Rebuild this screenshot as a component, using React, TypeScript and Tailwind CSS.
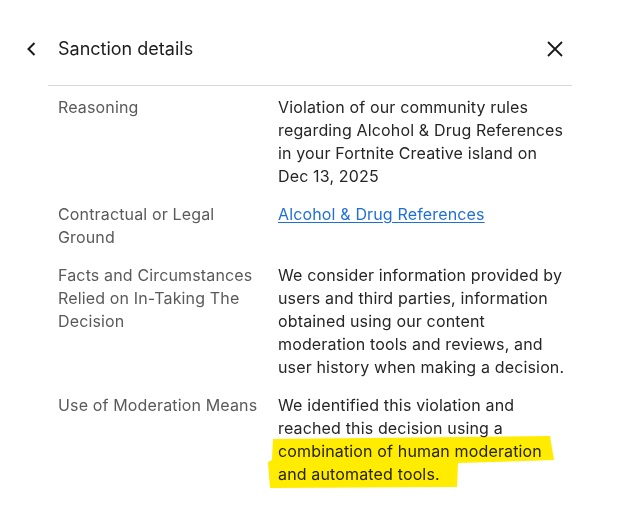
import React from "react";

const rows: { label: string; value: React.ReactNode }[] = [
  {
    label: "Reasoning",
    value:
      "Violation of our community rules regarding Alcohol & Drug References in your Fortnite Creative island on Dec 13, 2025",
  },
  {
    label: "Contractual or Legal Ground",
    value: (
      <a href="#" className="text-[#1f6fd8] underline underline-offset-2">
        Alcohol &amp; Drug References
      </a>
    ),
  },
  {
    label: "Facts and Circumstances Relied on In-Taking The Decision",
    value:
      "We consider information provided by users and third parties, information obtained using our content moderation tools and reviews, and user history when making a decision.",
  },
  {
    label: "Use of Moderation Means",
    value:
      "We identified this violation and reached this decision using a combination of human moderation and automated tools.",
  },
];

export default function App() {
  return (
    <div
      className="relative w-[634px] h-[508px] bg-white overflow-hidden"
      style={{ fontFamily: "Inter, 'Noto Sans', sans-serif" }}
    >
      <div className="flex items-center h-[28px] mt-[35px] pl-[25px] pr-[70px]">
        <svg width="14" height="16" viewBox="0 0 14 16" className="text-[#1a1a1a]">
          <path d="M9.5 2 L3.5 8 L9.5 14" fill="none" stroke="currentColor" strokeWidth="2" />
        </svg>
        <span className="ml-[19px] text-[18px] text-[#1c1c1c] leading-[28px]">Sanction details</span>
        <svg width="18" height="18" viewBox="0 0 18 18" className="ml-auto text-[#1a1a1a]">
          <path d="M2 2 L16 16 M16 2 L2 16" fill="none" stroke="currentColor" strokeWidth="1.8" />
        </svg>
      </div>
      <div className="ml-[48px] w-[524px] h-px bg-[#d9d9d9] mt-[22px]" />
      <div className="flex flex-col gap-[15px] mt-[10px] pl-[58px] text-[16px] leading-[23px] tracking-[0.15px]">
        {rows.map((r) => (
          <div key={r.label} className="flex">
            <div className="w-[204px] mr-[16px] text-[#5a5a5a]">{r.label}</div>
            <div className="w-[288px] text-[#262626] relative z-10">{r.value}</div>
          </div>
        ))}
      </div>
      <svg
        className="absolute left-0 top-0 pointer-events-none mix-blend-multiply z-20"
        width="634"
        height="508"
        viewBox="0 0 634 508"
      >
        <path
          d="M273 439 L550 436 L554 460 L458 463 L457 487 L270 488 L268 462 L272 460 Z"
          fill="#ffec00"
        />
      </svg>
    </div>
  );
}
